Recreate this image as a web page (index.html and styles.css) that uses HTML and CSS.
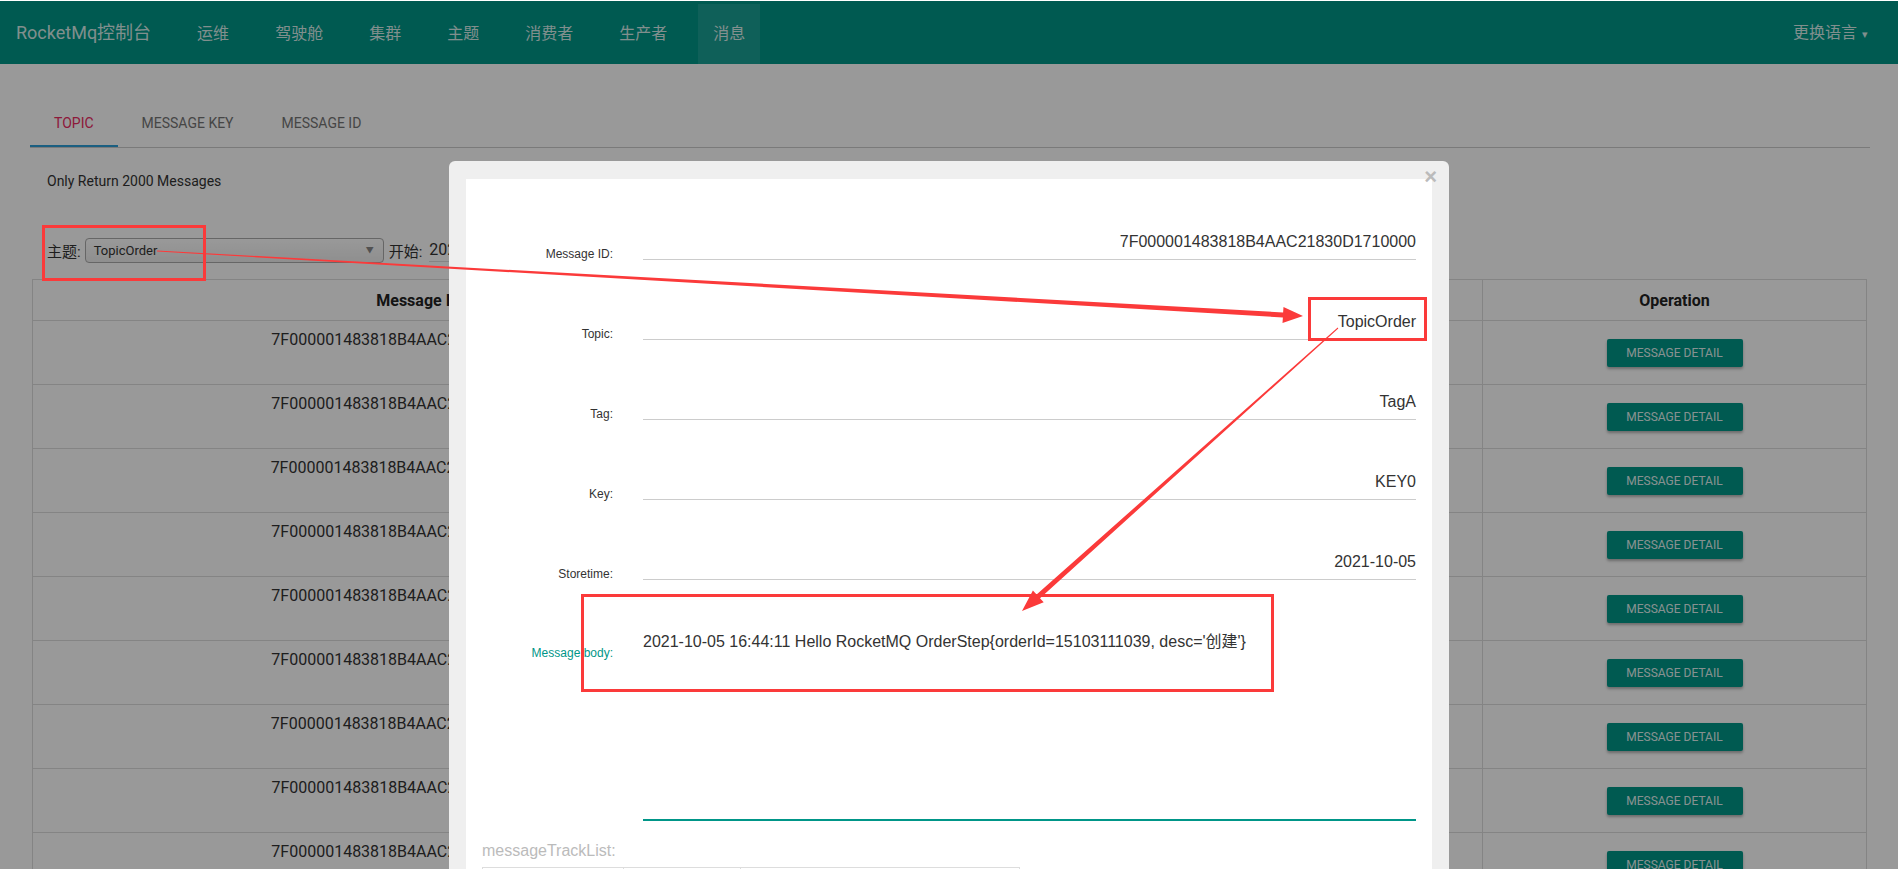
FILE: index.html
```html
<!DOCTYPE html>
<html lang="zh-CN">
<head>
    <meta charset="UTF-8">
    <title>RocketMq控制台</title>
    <link rel="stylesheet" href="styles.css">
</head>
<body>
    <header class="navbar">
        <span class="brand">RocketMq控制台</span>
        <nav class="nav-links">
            <a>运维</a>
            <a>驾驶舱</a>
            <a>集群</a>
            <a>主题</a>
            <a>消费者</a>
            <a>生产者</a>
            <a class="active">消息</a>
        </nav>
        <span class="lang">更换语言<span class="caret">▾</span></span>
    </header>

    <main class="content">
        <div class="tabs">
            <div class="tab active">TOPIC</div>
            <div class="tab">MESSAGE KEY</div>
            <div class="tab">MESSAGE ID</div>
        </div>

        <p class="hint">Only Return 2000 Messages</p>

        <div class="filter">
            <label>主题:</label>
            <div class="select">TopicOrder<span class="select-caret">▼</span></div>
            <label class="begin">开始:</label>
            <div class="date-input">2021-10-05 00:00:00</div>
        </div>

        <table class="msg-table">
            <colgroup>
                <col style="width: 772px">
                <col>
                <col>
                <col>
                <col style="width: 384px">
            </colgroup>
            <thead>
                <tr><th>Message ID</th><th>Tag</th><th>Key</th><th>StoreTime</th><th>Operation</th></tr>
            </thead>
            <tbody id="rows"></tbody>
        </table>
    </main>

    <div class="backdrop">
        <div class="modal">
            <span class="close">×</span>
            <div class="modal-body">
                <div class="field"><label>Message ID:</label><div class="value">7F000001483818B4AAC21830D1710000</div></div>
                <div class="field"><label>Topic:</label><div class="value">TopicOrder</div></div>
                <div class="field"><label>Tag:</label><div class="value">TagA</div></div>
                <div class="field"><label>Key:</label><div class="value">KEY0</div></div>
                <div class="field"><label>Storetime:</label><div class="value">2021-10-05</div></div>
                <div class="field body-field">
                    <label>Message body:</label>
                    <div class="body-text">2021-10-05 16:44:11 Hello RocketMQ OrderStep{orderId=15103111039, desc='创建'}</div>
                </div>
                <div class="track-title">messageTrackList:</div>
                <table class="track-table">
                    <tr><th></th><th></th><th></th></tr>
                </table>
            </div>
        </div>
    </div>

    <!-- screenshot annotations -->
    <svg class="marks" width="1898" height="869" viewBox="0 0 1898 869">
        <g fill="none" stroke="#fb3a3a" stroke-width="3">
            <rect x="43.5" y="226.5" width="161" height="53"/>
            <rect x="1309.5" y="298.5" width="116" height="41"/>
            <rect x="582.5" y="595.5" width="690" height="95"/>
        </g>
        <g fill="#fb3a3a">
            <polygon points="157,250.5 1283.1,312.4 1283.5,306.9 1303,316 1282.5,322.9 1282.9,317.4 157,251.5"/>
            <polygon points="1337.7,327.6 1036.6,594.4 1032.9,590.4 1022,611 1043.7,602.2 1040,598.2 1338.3,328.4"/>
        </g>
    </svg>

    <script>
        const ids = [
            "7F000001483818B4AAC21830D1710000",
            "7F000001483818B4AAC21830D1790001",
            "7F000001483818B4AAC21830D17C0002",
            "7F000001483818B4AAC21830D1800003",
            "7F000001483818B4AAC21830D1840004",
            "7F000001483818B4AAC21830D1880005",
            "7F000001483818B4AAC21830D18B0006",
            "7F000001483818B4AAC21830D18F0007",
            "7F000001483818B4AAC21830D1930008"
        ];
        const tbody = document.getElementById("rows");
        ids.forEach((id, i) => {
            const tr = document.createElement("tr");
            tr.innerHTML = `<td>${id}</td><td>TagA</td><td>KEY${i}</td><td>2021-10-05 16:44:11</td>
                            <td><button class="btn-detail">Message Detail</button></td>`;
            tbody.appendChild(tr);
        });
    </script>
</body>
</html>
```

FILE: styles.css
```css
body {
    margin: 0;
    padding-top: 1px;
    background-color: #fff;
    font-family: Roboto, "Noto Sans CJK SC", sans-serif;
    color: #333;
    overflow: hidden;
    height: 868px;
}

.navbar {
    display: flex;
    align-items: flex-start;
    height: 63px;
    padding: 0 30px 0 16px;
    background-color: #009688;
    color: rgba(255, 255, 255, 0.85);
}

.brand {
    font-size: 18px;
    line-height: 63px;
    margin-right: 31px;
}

.nav-links {
    display: flex;
    gap: 16px;
    margin-top: 3px;
}

.nav-links a {
    padding: 0 15px;
    font-size: 16px;
    line-height: 60px;
}

.nav-links a.active {
    background-color: rgba(255, 255, 255, 0.1);
}

.lang {
    margin-left: auto;
    font-size: 16px;
    line-height: 63px;
}

.caret {
    margin-left: 5px;
    font-size: 11px;
}

.content {
    margin: 0 28px 0 30px;
}

.tabs {
    display: flex;
    margin-top: 35px;
    border-bottom: 1px solid #ccc;
}

.tab {
    padding: 0 24px;
    height: 48px;
    line-height: 48px;
    font-size: 14px;
    color: #757575;
    box-sizing: border-box;
}

.tab.active {
    color: #ec2a62;
    border-bottom: 2px solid #2e9fd8;
}

.hint {
    margin: 24px 0 0 17px;
    font-size: 14px;
    line-height: 18px;
}

.filter {
    display: flex;
    align-items: center;
    margin: 48px 0 0 17px;
    height: 25px;
    font-size: 15px;
}

.select {
    position: relative;
    width: 299px;
    height: 25px;
    box-sizing: border-box;
    margin-left: 4px;
    padding-left: 8px;
    border: 1px solid #aaa;
    border-radius: 4px;
    background: linear-gradient(#fff, #eee);
    font-size: 13px;
    line-height: 23px;
}

.select-caret {
    position: absolute;
    right: 9px;
    top: 0;
    font-size: 8px;
    color: #888;
}

.begin {
    margin-left: 5px;
}

.date-input {
    margin-left: 7px;
    padding-bottom: 2px;
    border-bottom: 1px solid #ddd;
    font-size: 16px;
}

.msg-table {
    width: 1835px;
    margin: 16px 0 0 2px;
    border-collapse: collapse;
    table-layout: fixed;
}

.msg-table th,
.msg-table td {
    border: 1px solid #ddd;
    text-align: center;
}

.msg-table th {
    height: 38px;
    font-size: 16px;
    font-weight: bold;
    color: #222;
}

.msg-table td {
    height: 44px;
    padding: 9px 8px 10px;
    vertical-align: top;
    font-size: 16px;
    line-height: 20px;
    white-space: nowrap;
    overflow: hidden;
}

.btn-detail {
    margin-top: 9px;
    width: 136px;
    height: 28px;
    border: none;
    border-radius: 2px;
    background-color: #009688;
    color: rgba(255, 255, 255, 0.9);
    font-family: Roboto, sans-serif;
    font-size: 12px;
    text-transform: uppercase;
    box-shadow: 0 2px 3px rgba(0, 0, 0, 0.3);
}

/* modal */
.backdrop {
    position: fixed;
    top: 1px;
    left: 0;
    right: 0;
    bottom: 0;
    background-color: rgba(0, 0, 0, 0.4);
}

.modal {
    position: relative;
    width: 1000px;
    height: 900px;
    margin: 160px auto 0;
    padding: 18px 17px 0;
    box-sizing: border-box;
    background-color: #efefef;
    border-radius: 6px;
    font-family: "Liberation Sans", Arial, "Noto Sans CJK SC", sans-serif;
}

.close {
    position: absolute;
    top: 5px;
    right: 12px;
    font-size: 22px;
    line-height: 22px;
    font-weight: bold;
    color: #bbb;
}

.modal-body {
    height: 100%;
    background-color: #fff;
    padding: 1px 16px 0 0;
}

.field {
    display: flex;
    align-items: flex-end;
    height: 80px;
}

.field label {
    width: 147px;
    margin: 0 30px -1px 0;
    flex-shrink: 0;
    text-align: right;
    font-size: 12px;
    line-height: 14px;
    color: #333;
}

.value {
    flex: 1;
    padding-bottom: 7px;
    border-bottom: 1px solid #ccc;
    text-align: right;
    font-size: 16px;
    line-height: 20px;
    color: #333;
}

.body-field {
    align-items: flex-start;
    height: 243px;
}

.body-field label {
    margin-top: 66px;
    color: #009688;
}

.body-text {
    flex: 1;
    height: 241px;
    box-sizing: border-box;
    padding-top: 52px;
    border-bottom: 2px solid #009688;
    font-size: 16px;
    line-height: 20px;
    color: #333;
}

.track-title {
    margin: 18px 0 0 16px;
    font-size: 16px;
    line-height: 20px;
    color: #bbb;
}

.track-table {
    width: 538px;
    margin: 6px 0 0 16px;
    border-collapse: collapse;
}

.track-table th {
    height: 30px;
    border: 1px solid #ddd;
}

.track-table th:nth-child(1) { width: 138px; }
.track-table th:nth-child(2) { width: 114px; }

.marks {
    position: fixed;
    top: 0;
    left: 0;
    pointer-events: none;
}
```
